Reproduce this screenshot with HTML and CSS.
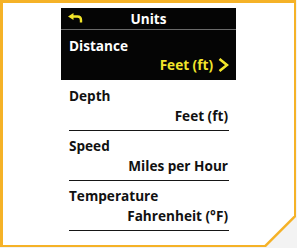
FILE: index.html
```html
<!DOCTYPE html>
<html>
<head>
<meta charset="utf-8">
<link rel="stylesheet" href="styles.css">
</head>
<body>
<div class="frame">
  <div class="inner">
    <div class="screen">
      <div class="header">
        <svg class="back" width="16" height="10" viewBox="0 0 16 10">
          <polygon points="0,3.5 5.5,0 5.5,7" fill="#f2e52a"/>
          <path d="M4.5 3.5 H9.5 Q13 3.5 13 7 V9.5" fill="none" stroke="#f2e52a" stroke-width="2.4"/>
        </svg>
        <span class="title">Units</span>
        <span class="spacer"></span>
      </div>
      <div class="row dark">
        <div class="label">Distance</div>
        <div class="value">Feet (ft)
          <svg class="chev" width="11" height="14" viewBox="0 0 11 14">
            <path d="M1.5 1 L9 7 L1.5 13" fill="none" stroke="#f2e52a" stroke-width="2.6"/>
          </svg>
        </div>
      </div>
      <div class="list">
        <div class="row first">
          <div class="label">Depth</div>
          <div class="value">Feet (ft)</div>
        </div>
        <div class="row">
          <div class="label">Speed</div>
          <div class="value">Miles per Hour</div>
        </div>
        <div class="row">
          <div class="label">Temperature</div>
          <div class="value">Fahrenheit (°F)</div>
        </div>
      </div>
    </div>
  </div>
</div>
</body>
</html>
```

FILE: styles.css
```css
html, body {
  margin: 0;
  padding: 0;
  background: #ffffff;
}
body {
  width: 297px;
  height: 248px;
  overflow: hidden;
  font-family: "Open Sans", "Noto Sans", sans-serif;
  font-weight: 700;
  font-size: 13.6px;
  background: #f3f3f3;
}
.frame {
  width: 296px;
  height: 247px;
  background: #f5b227;
  clip-path: polygon(0 0, 100% 0, 100% 217px, 266px 100%, 0 100%);
  padding: 3px 2px 2px 3px;
  box-sizing: border-box;
}
.inner {
  width: 291px;
  height: 242px;
  background: #ffffff;
  clip-path: polygon(0 0, 100% 0, 100% 212.5px, 261.5px 100%, 0 100%);
  padding: 5px 0 0 58px;
  box-sizing: border-box;
}
.screen {
  width: 175px;
}
.header {
  height: 21px;
  background: #050505;
  border-bottom: 1px solid #6a6a6a;
  display: grid;
  grid-template-columns: 1fr auto 1fr;
  align-items: center;
  padding: 0 7px;
  color: #ffffff;
  line-height: 20px;
}
.back {
  display: block;
  margin-top: -2px;
}
.title {
  text-align: center;
}
.row {
  display: flex;
  flex-direction: column;
  padding: 5px 0 4px 0;
  margin: 0 7px 0 8px;
  border-bottom: 1px solid #161616;
  color: #111111;
  line-height: 20px;
}
.row.first {
  padding-top: 6px;
}
.row.dark {
  margin: 0;
  padding: 6px 7px 5px 8px;
  background: #050505;
  border-bottom: none;
  color: #ffffff;
}
.label {
  height: 20px;
}
.value {
  align-self: flex-end;
  padding-right: 1px;
  display: flex;
  align-items: center;
  gap: 5px;
}
.dark .value {
  color: #f2e52a;
  padding-right: 0;
  margin-top: -1px;
}
.chev {
  display: block;
}
```
